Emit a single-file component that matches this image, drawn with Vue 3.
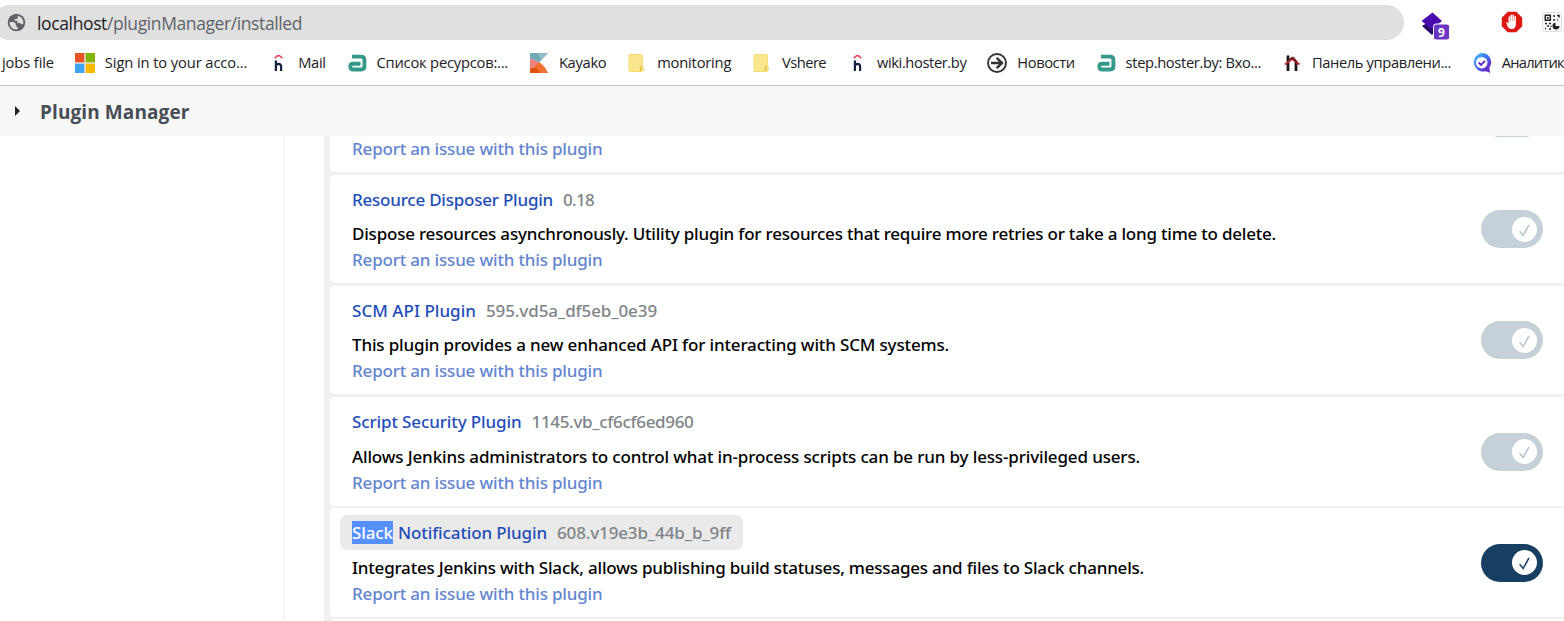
<script setup>
// Adjusts tracking so that a label occupies its given width in pixels.
const vFit = {
  mounted(el, { value }) {
    const range = document.createRange()
    range.selectNodeContents(el)
    const natural = range.getBoundingClientRect().width
    el.style.letterSpacing = `${(value - natural) / el.textContent.length}px`
    el.style.width = `${value}px`
  }
}

const bookmarks = [
  { label: 'jobs file', w: 52 },
  { icon: 'microsoft', label: 'Sign in to your acco...', w: 142.5 },
  { icon: 'hoster', label: 'Mail', w: 27.5 },
  { icon: 'step', label: 'Список ресурсов:...', w: 131.5 },
  { icon: 'kayako', label: 'Kayako', w: 47.5 },
  { icon: 'folder', label: 'monitoring', w: 74 },
  { icon: 'folder', label: 'Vshere', w: 44 },
  { icon: 'hoster', label: 'wiki.hoster.by', w: 89.5 },
  { icon: 'arrow', label: 'Новости', w: 57.5 },
  { icon: 'step', label: 'step.hoster.by: Вхо...', w: 135.5 },
  { icon: 'panel', label: 'Панель управлени...', w: 139 },
  { icon: 'analytics', label: 'Аналитик', w: 62 }
]

const plugins = [
  { name: 'Resource Disposer Plugin', nw: 201, version: '0.18', vw: 31, desc: 'Dispose resources asynchronously. Utility plugin for resources that require more retries or take a long time to delete.', dw: 924 },
  { name: 'SCM API Plugin', nw: 124, version: '595.vd5a_df5eb_0e39', vw: 171, desc: 'This plugin provides a new enhanced API for interacting with SCM systems.', dw: 597 },
  { name: 'Script Security Plugin', nw: 169.5, version: '1145.vb_cf6cf6ed960', vw: 162, desc: 'Allows Jenkins administrators to control what in-process scripts can be run by less-privileged users.', dw: 788 },
  { mark: 'Slack', name: 'Notification Plugin', nw: 149, version: '608.v19e3b_44b_b_9ff', vw: 174, desc: 'Integrates Jenkins with Slack, allows publishing build statuses, messages and files to Slack channels.', dw: 792, on: true }
]
</script>

<template>
  <div class="page">
    <div class="toolbar">
      <div class="omnibox">
        <svg class="globe" viewBox="0 0 24 24"><circle cx="12" cy="12" r="10" fill="#5f6368" /><path fill="#e0e0e0" d="M4 11.500h5l2.200 2v2.300l2 1.500v2.600A8 8 0 0 1 4 11.500zM13.500 4.200a8 8 0 0 1 6.300 9.500l-2.300.3-1.500-1.500h-3V10h-3V8h2.500l1-1.500z" /></svg>
        <div class="url"><span v-fit="70" class="host">localhost</span><span v-fit="195">/pluginManager/installed</span></div>
      </div>
      <div class="extensions">
        <svg class="layers" viewBox="0 0 30 30">
          <path d="M1 16L11 10l10 6-10 9z" fill="#29086f" /><path d="M.500 11L11.500 2.500l9.500 8.500-10 8z" fill="#4a0cb0" />
          <rect x="12.500" y="14" width="16" height="16" rx="2.500" fill="#6b36c2" stroke="#fff" />
          <text x="20.500" y="26.500" text-anchor="middle" fill="#fff" font-size="12" font-weight="700">9</text>
        </svg>
        <svg class="block" viewBox="0 0 22 22">
          <path d="M6.700.8h8.600l5.900 5.900v8.600l-5.900 5.900H6.700L.8 15.300V6.700z" fill="#dc1812" />
          <path d="M5.200 11.200c.8-.7 1.500.2 2.300 1.300V6.200c0-1.200 1.500-1.200 1.500 0V10h.4V4.800c0-1.300 1.600-1.300 1.600 0V10h.4V4.500c0-1.200 1.600-1.200 1.600 0V10h.4V6c0-1.200 1.500-1.200 1.500 0v7c0 3-1.500 5-4.300 5-2.500 0-3.500-1.500-4.300-3.500z" fill="#fff" />
        </svg>
        <svg class="qr" viewBox="0 0 20 20">
          <rect x=".5" y=".5" width="19" height="19" rx="2" fill="#fafafa" stroke="#dedede" />
          <g fill="none" stroke="#222" stroke-width="1.500"><path d="M3.300 3.300h5v5h-5zM12 3v2M12 7v2M15 3.500h2v2M15.500 7.500v1" /><path d="M3 11.500h2M7 11.500h2M5 14h2M3 16.500h1M7 17h2M9 14v1" /></g>
          <path d="M5 5h1.700v1.700H5zM13.500 10.500v3.500h4a3.500 3.500 0 1 1-4-3.500z" fill="#222" />
        </svg>
      </div>
    </div>

    <div class="bookmarks">
      <div v-for="(b, i) in bookmarks" :key="i" class="bookmark">
        <svg v-if="b.icon" class="favicon" viewBox="0 0 20 20">
          <template v-if="b.icon === 'microsoft'">
            <path d="M0 0h20v20H0z" fill="#e8e3dc" /><path d="M0 0h9.300v9.300H0z" fill="#e95224" /><path d="M10.700 0H20v9.300h-9.300z" fill="#83b500" /><path d="M0 10.700h9.300V20H0z" fill="#40a5ee" /><path d="M10.700 10.700H20V20h-9.300z" fill="#fcb900" />
          </template>
          <g v-else-if="b.icon === 'hoster'" fill="none">
            <path d="M6.700 5.200L9.500 2.700h2L14.300 5.200" stroke="#ed4251" stroke-width="1.600" />
            <path d="M7.900 7.500V18M7.900 13.500q0-2.700 2.600-2.700t2.600 2.700V18" stroke="#18203f" stroke-width="2.200" />
          </g>
          <path v-else-if="b.icon === 'step'" d="M5 3.600h9q3.400 0 3.400 3.400v6.300q0 3.200-3.200 3.200H6.200q-2.900 0-2.900-2.800t2.900-2.900H13.500" fill="none" stroke="#35998a" stroke-width="3.900" stroke-linejoin="round" />
          <template v-else-if="b.icon === 'kayako'">
            <path d="M1 0h18l-9 9.500L1 5z" fill="#72a8b4" /><path d="M9 0h10l-7 7.500z" fill="#91bec7" /><path d="M1 5l9 4.500L6 15l-5 5z" fill="#ec817e" /><path d="M10 9q6 4 9 11H1l5-7z" fill="#f07231" /><path d="M1 16q7-3 10 4H1z" fill="#e55207" />
          </template>
          <template v-else-if="b.icon === 'folder'">
            <path d="M3 1.500h11.300q1 0 1 1v11q1.200.6 1.200 2.500 0 2.500-2.500 2.500h-11q-1 0-1-1v-15q0-1 1-1z" fill="#fbe58d" stroke="#f4dc70" /><path d="M13.500 18v-3.500q.2-1.200 1.500-1" fill="none" stroke="#e3bd38" stroke-width="1.300" />
          </template>
          <g v-else-if="b.icon === 'arrow'" fill="none" stroke="#333">
            <circle cx="10" cy="10" r="9" stroke-width="1.900" /><path d="M4 10h11M9.700 4.800L15 10l-5.300 5.200" stroke-width="2.500" />
          </g>
          <g v-else-if="b.icon === 'panel'" fill="none">
            <path d="M6 2.500v15.500M14 9v9" stroke="#171717" stroke-width="2.800" /><path d="M3 11.500l7-5.500 7.500 5.500" stroke="#b52b30" stroke-width="2" /><path d="M7.500 6.500l3.500-1.800 4 4.500" stroke="#721c20" stroke-width="2" />
          </g>
          <template v-else>
            <defs><linearGradient id="ring" x2=".8" y2="1"><stop offset="0" stop-color="#3fc9ff" /><stop offset=".5" stop-color="#426cf5" /><stop offset="1" stop-color="#7015ba" /></linearGradient></defs>
            <path d="M9.700 0a9.300 9.300 0 0 1 7.600 14.800L18 20q-2-1.700-5-1.700A9.300 9.300 0 1 1 9.700 0z" fill="url(#ring)" /><circle cx="9.700" cy="9.700" r="5.800" fill="#fff" /><path d="M6.700 9.500l2.300 2.300 4-4" fill="none" stroke="#6127c6" stroke-width="1.900" />
          </template>
        </svg>
        <span v-fit="b.w" class="label">{{ b.label }}</span>
      </div>
    </div>

    <header class="breadcrumb">
      <span class="caret"></span>
      <h1 v-fit="149.500">Plugin Manager</h1>
    </header>

    <main class="content">
      <aside class="side"></aside>
      <section class="list">
        <article class="card first">
          <div class="info"><a v-fit="250.500" class="report">Report an issue with this plugin</a></div>
          <div class="toggle"><span class="knob"></span></div>
        </article>
        <article v-for="p in plugins" :key="p.name" class="card">
          <div class="info">
            <div class="title" :class="{ found: p.mark }">
              <mark v-if="p.mark" v-fit="41">{{ p.mark }}</mark>
              <a v-fit="p.nw" class="name">{{ p.name }}</a>
              <span v-fit="p.vw" class="version">{{ p.version }}</span>
            </div>
            <p v-fit="p.dw" class="desc">{{ p.desc }}</p>
            <a v-fit="250.500" class="report">Report an issue with this plugin</a>
          </div>
          <div class="toggle" :class="{ on: p.on }">
            <span class="knob"><svg viewBox="0 0 25 25"><path d="M7.600 14.300l3.500 4.200L17 7.800" fill="none" stroke="currentColor" stroke-width="1.500" /></svg></span>
          </div>
        </article>
        <div class="card next"></div>
      </section>
    </main>
  </div>
</template>

<style>
body { margin: 0; overflow: hidden; }
</style>

<style scoped>
.page { width: 1564px; height: 621px; overflow: hidden; display: flex; flex-direction: column; background: #fff; font-family: "Open Sans", "Noto Sans", sans-serif; color: #000; }
.toolbar { height: 40px; flex: none; display: flex; box-sizing: border-box; padding-top: 5px; }
.omnibox { width: 1412px; height: 35px; margin-left: -8px; border-radius: 18px; background: #e0e0e0; display: flex; align-items: center; flex: none; }
.globe { width: 21px; height: 21px; margin-left: 14px; margin-top: -1px; }
.url { display: flex; margin-left: 10px; font-size: 17.500px; line-height: 36px; color: #5f6368; white-space: nowrap; }
.host { color: #202124; }
.extensions { display: flex; align-items: flex-start; }
.layers { width: 30px; height: 30px; margin: 5px 0 0 17px; }
.block { width: 22px; height: 22px; margin: 6px 0 0 49.500px; }
.qr { width: 20px; height: 20px; margin: 7px 0 0 19px; }
.bookmarks { height: 45px; flex: none; display: flex; align-items: center; gap: 20.850px; padding-left: 2px; border-bottom: 1px solid #c6c8c9; }
.bookmark { display: flex; align-items: center; gap: 10px; flex: none; }
.favicon { width: 20px; height: 20px; flex: none; }
.label { font-size: 14.700px; line-height: 22px; margin-top: -1px; color: #202124; white-space: nowrap; }
.breadcrumb { height: 50px; flex: none; display: flex; align-items: center; background: #f7f7f7; }
.caret { margin-left: 15px; border-left: 5px solid #222; border-top: 5px solid transparent; border-bottom: 5px solid transparent; }
h1 { margin: 2px 0 0 20px; font-size: 19px; line-height: 28px; font-weight: 700; color: #474d55; white-space: nowrap; }
.content { flex: 1; min-height: 0; display: flex; }
.side { width: 283px; flex: none; border-right: 1px solid #f0f0f0; }
.list { margin-left: 40px; flex: 1; background: #f1f1f1; padding-left: 6px; display: flex; flex-direction: column; gap: 2.600px; overflow: hidden; }
.card { height: 108.600px; flex: none; box-sizing: border-box; padding-right: 21px; background: #fff; border-radius: 5px 0 0 5px; display: flex; align-items: center; justify-content: space-between; }
.first { margin-top: -72.600px; }
.first .info { justify-content: flex-end; }
.info { align-self: stretch; display: flex; flex-direction: column; align-items: flex-start; box-sizing: border-box; padding: 7.200px 0 9.400px 10px; font-family: "Noto Sans", "Open Sans", sans-serif; font-size: 17px; font-weight: 500; white-space: nowrap; }
.title { height: 35px; display: flex; align-items: center; padding: 0 12px; border-radius: 7px; line-height: 23px; }
.found { background: #eaeaea; }
mark { background: #568fff; color: #fff; margin-right: 5px; }
.name { color: #1f4db8; }
.version { margin-left: 10px; color: #808488; }
.desc { margin: 4.400px 0 0 12px; line-height: 26px; }
.report { margin-left: 12px; line-height: 26.500px; color: #6385d0; }
.toggle { width: 62px; height: 38px; flex: none; margin-top: .6px; box-sizing: border-box; border-radius: 19px; background: #c6d0d8; color: #b5c3cf; padding: 6.500px 6px; display: flex; justify-content: flex-end; }
.on { background: #173f61; color: #173f61; }
.knob { width: 25px; height: 25px; border-radius: 50%; background: #fff; }
.knob svg { display: block; width: 25px; height: 25px; }
</style>
